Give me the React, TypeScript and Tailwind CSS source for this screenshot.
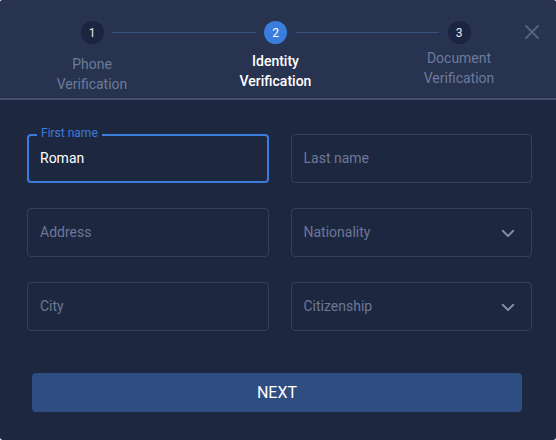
import React from 'react';

const font = { fontFamily: 'Roboto, "Liberation Sans", sans-serif' };

function Step({ n, active, lines, offset }: { n: number; active?: boolean; lines: string[]; offset: string }) {
  return (
    <div className="flex w-[120px] flex-col items-center">
      <div
        className={
          'flex h-[23px] w-[23px] items-center justify-center rounded-full text-[12px] ' +
          (active ? 'bg-[#3b7ddd] text-white' : 'bg-[#1c2540] text-[#e4e8f0]')
        }
      >
        {n}
      </div>
      <div
        className={
          'text-center text-[14px] leading-[20px] ' +
          offset +
          (active ? ' font-medium text-white' : ' text-[#6c7b9b]')
        }
      >
        {lines.map((l) => (
          <div key={l}>{l}</div>
        ))}
      </div>
    </div>
  );
}

function Chevron() {
  return (
    <svg width="18" height="18" viewBox="0 0 24 24" fill="none" stroke="#8591ab" strokeWidth="2.4" strokeLinecap="round" strokeLinejoin="round">
      <path d="M5 9l7 7 7-7" />
    </svg>
  );
}

function Field({ placeholder, select }: { placeholder: string; select?: boolean }) {
  return (
    <div className="flex h-[49px] items-center justify-between rounded-[4px] border border-[#363f5a] pl-[12px] pr-[14px]">
      <span className="text-[14px] text-[#6c7896]">{placeholder}</span>
      {select && <Chevron />}
    </div>
  );
}

export default function App() {
  return (
    <div className="h-[440px] w-[556px] overflow-hidden rounded-[3px] bg-[#1e2740]" style={font}>
      <div className="relative h-[100px] border-b-2 border-[#45506c] bg-[#28334f]">
        <div className="flex justify-between pl-[32px] pr-[37px] pt-[21px]">
          <Step n={1} lines={['Phone', 'Verification']} offset="mt-[10px]" />
          <div className="mx-[-40px] mt-[11px] h-px flex-1 bg-[#37507e]" />
          <Step n={2} active lines={['Identity', 'Verification']} offset="mt-[7px]" />
          <div className="mx-[-40px] mt-[11px] h-px flex-1 bg-[#37507e]" />
          <Step n={3} lines={['Document', 'Verification']} offset="mt-[4px]" />
        </div>
        <button className="absolute right-[17px] top-[25px] text-[#56617f]">
          <svg width="14" height="14" viewBox="0 0 14 14" stroke="currentColor" strokeWidth="2" strokeLinecap="round">
            <path d="M1 1l12 12M13 1L1 13" />
          </svg>
        </button>
      </div>

      <div className="grid grid-cols-2 gap-x-[22px] gap-y-[25px] pl-[27px] pr-[24px] pt-[34px]">
        <div className="relative flex h-[49px] items-center rounded-[4px] border-2 border-[#3b7ddd] pl-[11px]">
          <span className="absolute left-[8px] top-[-10px] bg-[#1e2740] px-[4px] text-[12px] leading-[15px] text-[#3b7ddd]">
            First name
          </span>
          <span className="text-[14px] text-white">Roman</span>
        </div>
        <Field placeholder="Last name" />
        <Field placeholder="Address" />
        <Field placeholder="Nationality" select />
        <Field placeholder="City" />
        <Field placeholder="Citizenship" select />
      </div>

      <div className="pl-[32px] pr-[34px] pt-[42px]">
        <button className="flex h-[39px] w-full items-center justify-center rounded-[4px] bg-[#2e4d80] text-[16px] text-white">
          NEXT
        </button>
      </div>
    </div>
  );
}
